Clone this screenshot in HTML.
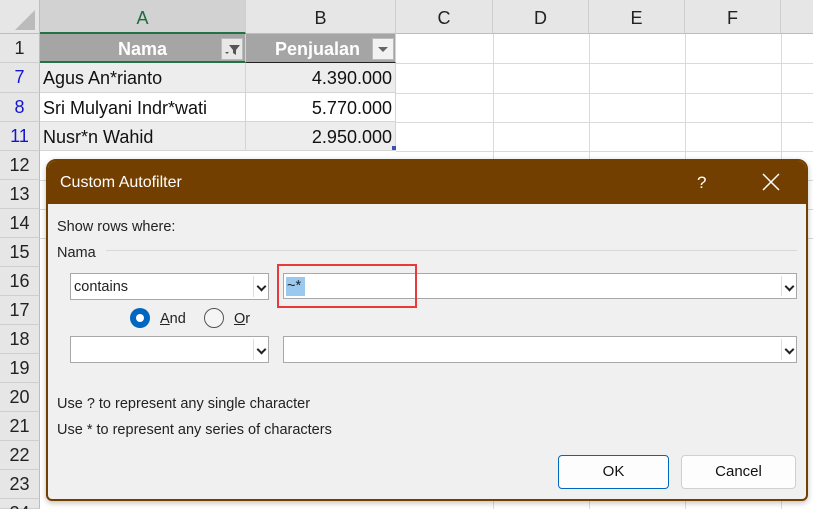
<!DOCTYPE html>
<html style="overflow:hidden;width:813px;height:509px"><head><style>
*{box-sizing:border-box;margin:0;padding:0}
body{width:813px;height:509px;overflow:hidden;background:#fff;font-family:"Liberation Sans",sans-serif;position:relative}
.a{position:absolute}
.rh{position:absolute;left:0;width:40px;background:#e6e6e6;border-bottom:1px solid #cfcfcf;border-right:1px solid #bdbdbd;text-align:center;font-size:18px;color:#222;line-height:29px;height:29px}
.ch{position:absolute;top:0;height:34px;background:#e6e6e6;border-right:1px solid #cfcfcf;border-bottom:1px solid #bdbdbd;text-align:center;font-size:18px;line-height:36px;color:#222}
.cell{position:absolute;font-size:18px;line-height:31px;color:#111;border-bottom:1px solid #d4d4d4;border-right:1px solid #d4d4d4}
.vl{position:absolute;top:34px;width:1px;height:475px;background:#dadada}
.hl{position:absolute;left:40px;width:773px;height:1px;background:#dadada}
.t{font-size:14.5px;color:#222;position:absolute}
.combo{position:absolute;background:#fff;border:1px solid #a8a8a8}
.arr{position:absolute;right:0;top:2px;bottom:2px;width:15px;border-left:1px solid #ddd}
.arr:after{content:"";position:absolute;left:4px;top:7px;width:5px;height:5px;border-right:2px solid #222;border-bottom:2px solid #222;transform:rotate(45deg)}
.btn{position:absolute;background:#fdfdfd;border:1px solid #d0d0d0;border-radius:4px;text-align:center;font-size:15px;line-height:32px;color:#111}
</style></head><body>
<div class="hl" style="top:180px"></div><div class="hl" style="top:209px"></div><div class="hl" style="top:238px"></div>
<div class="vl" style="left:493px"></div><div class="vl" style="left:589px"></div><div class="vl" style="left:685px"></div><div class="vl" style="left:781px"></div>
<div class="hl" style="top:63px;left:396px"></div><div class="hl" style="top:93px;left:396px"></div><div class="hl" style="top:122px;left:396px"></div><div class="hl" style="top:151px;left:396px"></div>
<div class="a" style="left:0;top:0;width:40px;height:34px;background:#e6e6e6;border-right:1px solid #bdbdbd;border-bottom:1px solid #bdbdbd"></div>
<div class="a" style="left:15px;top:10px;width:0;height:0;border-left:20px solid transparent;border-bottom:20px solid #bbb"></div>
<div class="ch" style="left:40px;width:206px;background:#d2d2d2;color:#1e6b3e;border-bottom:2px solid #217346">A</div>
<div class="ch" style="left:246px;width:150px">B</div>
<div class="ch" style="left:396px;width:97px">C</div>
<div class="ch" style="left:493px;width:96px">D</div>
<div class="ch" style="left:589px;width:96px">E</div>
<div class="ch" style="left:685px;width:96px">F</div>
<div class="ch" style="left:781px;width:40px"></div>
<div class="rh" style="top:34px">1</div>
<div class="rh" style="top:63px;color:#1515d0;height:30px">7</div>
<div class="rh" style="top:93px;color:#1515d0">8</div>
<div class="rh" style="top:122px;color:#1515d0">11</div>
<div class="rh" style="top:151px">12</div><div class="rh" style="top:180px">13</div><div class="rh" style="top:209px">14</div><div class="rh" style="top:238px">15</div><div class="rh" style="top:267px">16</div><div class="rh" style="top:296px">17</div><div class="rh" style="top:325px">18</div><div class="rh" style="top:354px">19</div><div class="rh" style="top:383px">20</div><div class="rh" style="top:412px">21</div><div class="rh" style="top:441px">22</div><div class="rh" style="top:470px">23</div><div class="rh" style="top:499px;height:10px">24</div>
<div class="cell" style="left:40px;top:34px;width:206px;height:29px;background:#a5a5a5;color:#fff;font-weight:bold;text-align:center;border-bottom:2px solid #217346">Nama</div>
<div class="a" style="left:221px;top:38px;width:22px;height:22px;background:#e8e8e8;border:1px solid #bbb"><svg width="20" height="20"><path d="M7 6h11l-4 5v5l-3-2v-3z" fill="#555"/><path d="M3 13h4l-2 2z" fill="#555"/></svg></div>
<div class="cell" style="left:246px;top:34px;width:150px;height:29px;background:#a5a5a5;color:#fff;font-weight:bold;padding-left:29px;border-bottom:1px solid #222">Penjualan</div>
<div class="a" style="left:372px;top:38px;width:22px;height:22px;background:#f2f2f2;border:1px solid #bbb"><div class="a" style="left:5px;top:8px;border-left:5px solid transparent;border-right:5px solid transparent;border-top:5px solid #666"></div></div>
<div class="cell" style="left:40px;top:63px;width:206px;height:30px;background:#ededed;padding-left:3px">Agus An*rianto</div>
<div class="cell" style="left:246px;top:63px;width:150px;height:30px;background:#ededed;text-align:right;padding-right:3px">4.390.000</div>
<div class="cell" style="left:40px;top:93px;width:206px;height:29px;padding-left:3px">Sri Mulyani Indr*wati</div>
<div class="cell" style="left:246px;top:93px;width:150px;height:29px;text-align:right;padding-right:3px">5.770.000</div>
<div class="cell" style="left:40px;top:122px;width:206px;height:29px;background:#ededed;padding-left:3px">Nusr*n Wahid</div>
<div class="cell" style="left:246px;top:122px;width:150px;height:29px;background:#ededed;text-align:right;padding-right:3px">2.950.000</div>
<div class="a" style="left:392px;top:146px;width:4px;height:4px;background:#3b50b0"></div>
<div class="a" style="left:46px;top:159px;width:762px;height:342px;background:#f0f0f0;border:2px solid #733f00;border-radius:10px 10px 6px 6px;box-shadow:0 2px 6px rgba(0,0,0,.25);overflow:hidden">
 <div class="a" style="left:0;top:0;width:760px;height:43px;background:#733f00"></div>
 <div class="a" style="left:12px;top:13px;color:#fff;font-size:16px">Custom Autofilter</div>
 <div class="a" style="left:649px;top:12px;color:#fff;font-size:17px">?</div>
 <svg class="a" style="left:714px;top:12px" width="18" height="18"><path d="M1 1L17 17M17 1L1 17" stroke="#fff" stroke-width="1.5"/></svg>
</div>
<div class="t" style="left:57px;top:219px">Show rows where:</div>
<div class="t" style="left:57px;top:245px">Nama</div>
<div class="a" style="left:106px;top:250px;width:691px;height:1px;background:#d8d8d8"></div>
<div class="combo" style="left:70px;top:273px;width:199px;height:27px"><div class="t" style="left:3px;top:5px">contains</div><div class="arr"></div></div>
<div class="combo" style="left:283px;top:273px;width:514px;height:26px"><div class="a" style="left:2px;top:3px;width:19px;height:19px;background:#99c9ef"></div><div class="t" style="left:3px;top:4px">~*</div><div class="arr"></div></div>
<div class="a" style="left:277px;top:264px;width:140px;height:44px;border:2px solid #e83a3a"></div>
<div class="a" style="left:130px;top:308px;width:20px;height:20px;border-radius:50%;background:#0067c0"></div>
<div class="a" style="left:136px;top:314px;width:8px;height:8px;border-radius:50%;background:#fff"></div>
<div class="t" style="left:160px;top:311px"><u>A</u>nd</div>
<div class="a" style="left:204px;top:308px;width:20px;height:20px;border-radius:50%;border:1px solid #555;background:#f5f5f5"></div>
<div class="t" style="left:234px;top:311px"><u>O</u>r</div>
<div class="combo" style="left:70px;top:336px;width:199px;height:27px"><div class="arr"></div></div>
<div class="combo" style="left:283px;top:336px;width:514px;height:27px"><div class="arr"></div></div>
<div class="t" style="left:57px;top:396px">Use ? to represent any single character</div>
<div class="t" style="left:57px;top:422px">Use * to represent any series of characters</div>
<div class="btn" style="left:558px;top:455px;width:111px;height:34px;border:1px solid #0067c0">OK</div>
<div class="btn" style="left:681px;top:455px;width:115px;height:34px">Cancel</div>
</body></html>
